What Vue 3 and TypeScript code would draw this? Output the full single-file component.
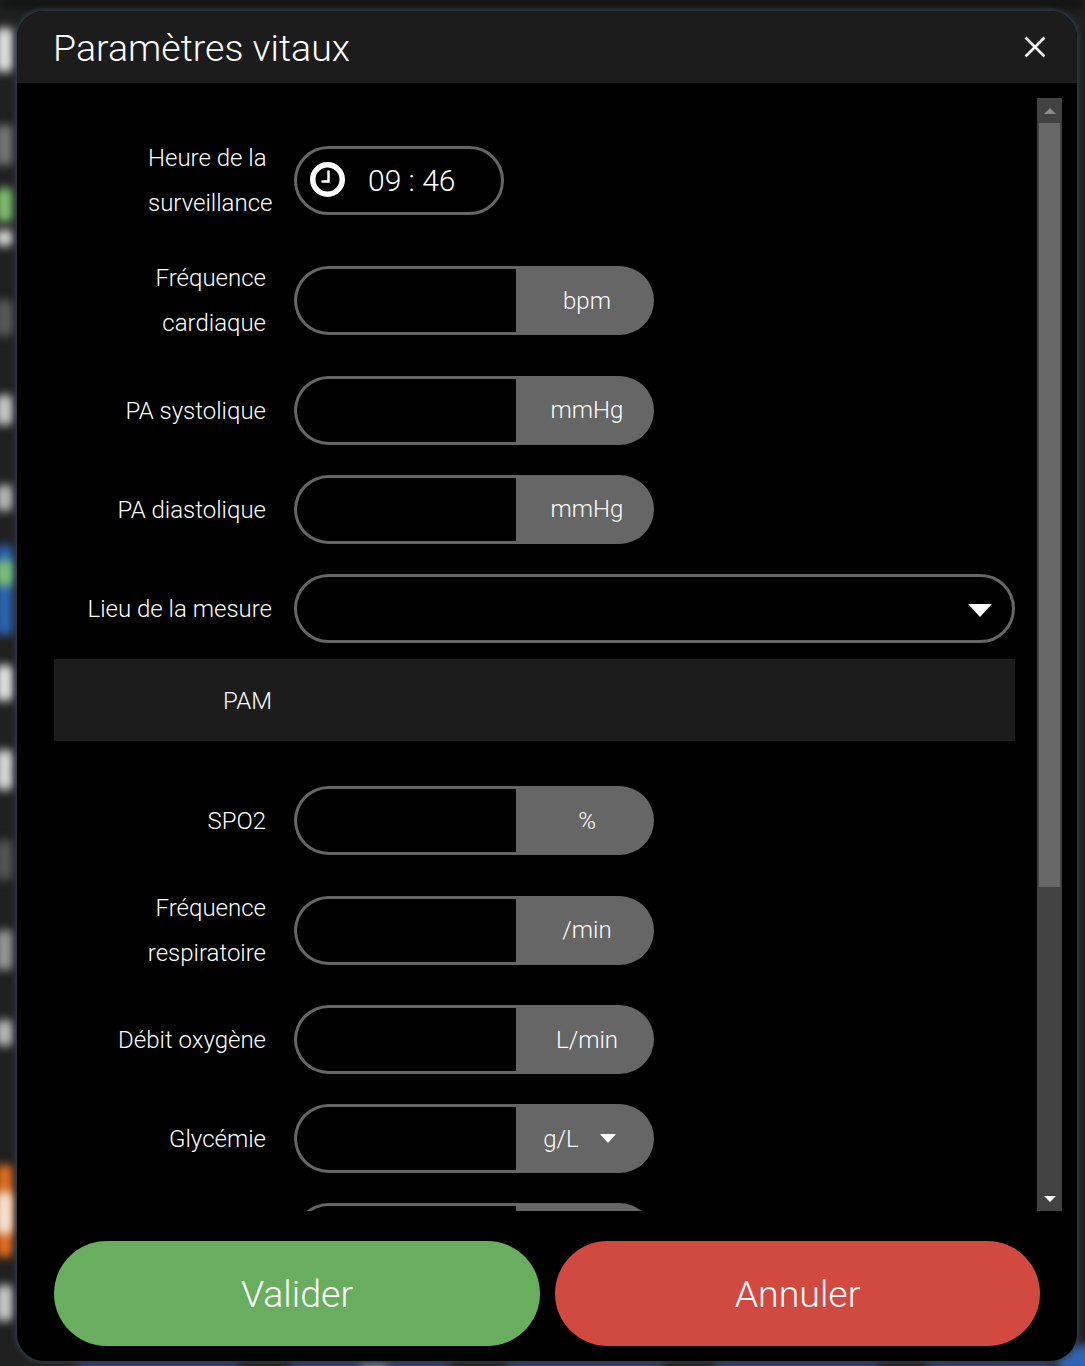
<script setup lang="ts">
interface Blob { y: number; h: number; c: string; x?: number; w?: number }
const blobs: Blob[] = [
  { y: 28, h: 44, c: '#e4e4e4' },
  { y: 125, h: 40, c: '#777777' },
  { y: 188, h: 34, c: '#7fc26f' },
  { y: 230, h: 16, c: '#dddddd' },
  { y: 300, h: 36, c: '#5c5c5c' },
  { y: 395, h: 30, c: '#cccccc' },
  { y: 485, h: 26, c: '#bbbbbb' },
  { y: 545, h: 90, c: '#2a66b8' },
  { y: 560, h: 26, c: '#7fc26f' },
  { y: 665, h: 36, c: '#e6e6e6' },
  { y: 750, h: 40, c: '#dddddd' },
  { y: 840, h: 40, c: '#555555' },
  { y: 930, h: 40, c: '#999999' },
  { y: 1020, h: 26, c: '#bbbbbb' },
  { y: 1165, h: 92, c: '#e66f22' },
  { y: 1192, h: 42, c: '#f4e4da' },
  { y: 1285, h: 36, c: '#cccccc' },
  { y: 0, h: 7, x: 0, w: 1085, c: '#0a0b0c' },
  { y: 1362, h: 8, x: 76, w: 163, c: '#2a5aa4' },
  { y: 1362, h: 8, x: 290, w: 160, c: '#2a5aa4' },
  { y: 1362, h: 8, x: 360, w: 28, c: '#7d8ea6' },
  { y: 1362, h: 8, x: 505, w: 159, c: '#2a5aa4' },
  { y: 1362, h: 8, x: 713, w: 166, c: '#2a5aa4' },
  { y: 1362, h: 8, x: 927, w: 125, c: '#2a5aa4' },
  { y: 1345, h: 30, x: 1056, w: 40, c: '#2f63b4' },
]

const blobStyle = (b: Blob) => ({
  top: `${b.y}px`,
  height: `${b.h}px`,
  left: `${b.x ?? -4}px`,
  width: `${b.w ?? 17}px`,
  background: b.c,
})

interface Row { label: string[]; unit: string; caret?: boolean }
const groupA: Row[] = [
  { label: ['Fréquence', 'cardiaque'], unit: 'bpm' },
  { label: ['PA systolique'], unit: 'mmHg' },
  { label: ['PA diastolique'], unit: 'mmHg' },
]
const groupB: Row[] = [
  { label: ['SPO2'], unit: '%' },
  { label: ['Fréquence', 'respiratoire'], unit: '/min' },
  { label: ['Débit oxygène'], unit: 'L/min' },
  { label: ['Glycémie'], unit: 'g/L', caret: true },
  { label: [''], unit: '' },
]
</script>

<template>
  <div class="page">
    <div class="backdrop">
      <span v-for="(b, i) in blobs" :key="i" class="blob" :style="blobStyle(b)"></span>
    </div>
    <div class="dialog">
      <header class="head">
        <h1 class="title">Paramètres vitaux</h1>
        <svg class="close" width="22" height="22" viewBox="0 0 22 22" aria-label="Fermer">
          <path d="M1.5 1.5 L20.5 20.5 M20.5 1.5 L1.5 20.5" stroke="#fff" stroke-width="2.6" />
        </svg>
      </header>

      <div class="main">
        <div class="scroll">
          <div class="row two first">
            <div class="label flush time-label">Heure de la<br />surveillance</div>
            <div class="time">
              <svg class="clock" width="35" height="35" viewBox="0 0 35 35">
                <circle cx="17.5" cy="17.5" r="14.75" fill="none" stroke="#fff" stroke-width="5.5" />
                <path d="M18.5 8.5 V19.5 H11.5" fill="none" stroke="#fff" stroke-width="2.5" />
              </svg>
              <span class="time-text">09 : 46</span>
            </div>
          </div>

          <div v-for="r in groupA" :key="r.label[0]" class="row" :class="{ two: r.label.length > 1 }">
            <div class="label">
              <template v-for="(l, i) in r.label" :key="i"><br v-if="i" />{{ l }}</template>
            </div>
            <div class="field">
              <div class="input"></div>
              <div class="unit">{{ r.unit }}</div>
            </div>
          </div>

          <div class="row select-row">
            <div class="label flush">Lieu de la mesure</div>
            <div class="select">
              <svg width="24" height="13" viewBox="0 0 24 13"><path d="M0 0 H24 L12 13 Z" fill="#fff" /></svg>
            </div>
          </div>

          <div class="pam"><div class="label flush">PAM</div></div>

          <div v-for="r in groupB" :key="r.label[0] + r.unit" class="row" :class="{ two: r.label.length > 1 }">
            <div class="label">
              <template v-for="(l, i) in r.label" :key="i"><br v-if="i" />{{ l }}</template>
            </div>
            <div class="field">
              <div class="input"></div>
              <div class="unit" :class="{ 'has-caret': r.caret }">
                {{ r.unit }}
                <svg v-if="r.caret" width="16" height="9" viewBox="0 0 16 9"><path d="M0 0 H16 L8 9 Z" fill="#fff" /></svg>
              </div>
            </div>
          </div>
        </div>

        <div class="bar">
          <div class="arrow">
            <svg width="12" height="6" viewBox="0 0 12 6"><path d="M0 6 H12 L6 0 Z" fill="#8a8a8a" /></svg>
          </div>
          <div class="thumb"></div>
          <div class="rest"></div>
          <div class="arrow down">
            <svg width="12" height="6" viewBox="0 0 12 6"><path d="M0 0 H12 L6 6 Z" fill="#fff" /></svg>
          </div>
        </div>
      </div>

      <footer class="foot">
        <button class="btn ok" type="button">Valider</button>
        <button class="btn ko" type="button">Annuler</button>
      </footer>
    </div>
  </div>
</template>

<style>
html, body { margin: 0; background: #202020; }
</style>

<style scoped>
.page {
  position: relative;
  box-sizing: border-box;
  width: 1085px;
  height: 1366px;
  overflow: hidden;
  padding: 11px 8px 5px 17px;
  background: #202020;
  font-family: Roboto, "Liberation Sans", sans-serif;
  font-weight: 300;
  color: #fff;
}
.backdrop {
  position: absolute;
  inset: 0;
  overflow: hidden;
}
.blob {
  position: absolute;
  display: block;
  border-radius: 5px;
  filter: blur(5px);
}
.dialog {
  position: relative;
  box-sizing: border-box;
  height: 1350px;
  display: flex;
  flex-direction: column;
  background: #000;
  border-radius: 27px;
  overflow: hidden;
  box-shadow: 0 0 5px 2px rgba(52, 64, 78, 0.85);
}
.head {
  box-sizing: border-box;
  height: 72px;
  flex: none;
  display: flex;
  align-items: center;
  justify-content: space-between;
  padding: 2px 31px 0 36px;
  background: #1c1c1c;
}
.title {
  margin: 0;
  font-size: 37.5px;
  font-weight: 300;
  line-height: 68px;
  color: #fff;
}
.close { display: block; margin-top: -3px; }
.main {
  height: 1113px;
  flex: none;
  margin-top: 15px;
  display: flex;
  padding-left: 37px;
}
.scroll {
  width: 961px;
  flex: none;
  height: 100%;
  overflow: hidden;
}
.row {
  display: flex;
  align-items: center;
  min-height: 69px;
  margin-bottom: 30px;
}
.row.two { height: 90px; margin-bottom: 30px; }
.row.first { margin-top: 37.5px; }
.select-row { margin-bottom: 16px; }
.label {
  box-sizing: border-box;
  width: 240px;
  flex: none;
  padding-top: 2px;
  padding-right: 28px;
  text-align: right;
  font-size: 24px;
  line-height: 45px;
}
.row.two .label { padding-top: 1px; }
.label.flush { padding-right: 22px; }
.time-label {
  display: block;
  padding-left: 94px;
  text-align: left;
  white-space: nowrap;
}
.time {
  box-sizing: border-box;
  width: 210px;
  height: 69px;
  display: flex;
  align-items: center;
  gap: 23px;
  padding-left: 13px;
  border: 3px solid #666;
  border-radius: 35px;
}
.clock { display: block; margin-top: -2px; }
.time-text { font-size: 30px; color: #fff; }
.field {
  width: 360px;
  height: 69px;
  display: flex;
}
.input {
  box-sizing: border-box;
  width: 222px;
  flex: none;
  border: 3px solid #666;
  border-right: 0;
  border-radius: 35px 0 0 35px;
}
.unit {
  flex: 1;
  display: flex;
  align-items: center;
  justify-content: center;
  padding-left: 4px;
  background: #666;
  border-radius: 0 35px 35px 0;
  font-size: 24px;
}
.unit.has-caret { gap: 21px; padding-left: 0; padding-right: 11px; }
.select {
  box-sizing: border-box;
  width: 721px;
  height: 69px;
  display: flex;
  align-items: center;
  justify-content: flex-end;
  padding-right: 20px;
  border: 3px solid #666;
  border-radius: 35px;
}
.select svg { display: block; margin-top: 4px; }
.pam {
  width: 961px;
  height: 82px;
  display: flex;
  align-items: center;
  margin-bottom: 45.5px;
  background: #1c1c1c;
}
.pam .label { width: 240px; padding-top: 4px; padding-right: 22px; }
.bar {
  width: 25px;
  flex: none;
  margin-left: 22px;
  display: flex;
  flex-direction: column;
  background: #424242;
}
.arrow {
  height: 25px;
  flex: none;
  display: flex;
  align-items: center;
  justify-content: center;
}
.arrow svg { display: block; }
.thumb {
  height: 764px;
  flex: none;
  margin: 0 2px;
  background: #686868;
}
.rest { flex: 1; }
.foot {
  flex: none;
  display: flex;
  gap: 15px;
  margin-top: 30px;
  padding-left: 37px;
}
.btn {
  height: 105px;
  width: 486px;
  padding: 0;
  border: 0;
  border-radius: 53px;
  font-family: inherit;
  font-size: 37.5px;
  font-weight: 300;
  color: #fff;
}
.ko { width: 485px; background: #d2493f; }
.ok { background: #69ad5f; }
</style>
